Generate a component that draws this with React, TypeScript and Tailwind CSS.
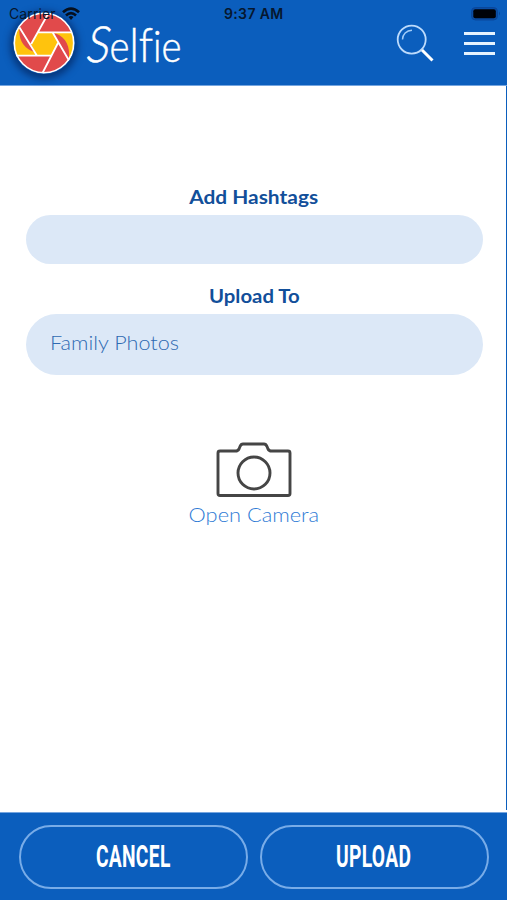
function ShutterLogo() {
  return (
    <svg
      viewBox="0 0 62 62"
      className="h-[62px] w-[62px] shrink-0 rounded-full shadow-[0_2px_7px_3px_rgba(0,15,60,0.5)]"
    >
      <circle cx="31" cy="31" r="30" fill="#e14a4b" />
      {/* Yellow blades and opening */}
      <path
        d="M25 20.3H39.5L45.5 31L38 43.7H24L18 32Z M6 15C-1 26 0 36 3.5 43.7H24L21.5 40C12 37 5 29 6.5 15Z M39.5 20.3H59C62 30 61 41 55.5 48C58 35 53 24 39.5 20.3Z"
        fill="#ffc30d"
      />
      <path
        d="M35 2L18.2 32M25 20.3H59M6.5 15.5L24 43.7M3 43.7H38M29.5 61L45.5 30M39.5 20.3L56 48.5"
        fill="none"
        stroke="white"
        strokeWidth="1.8"
      />
      <circle cx="31" cy="31" r="29.7" fill="none" stroke="white" strokeWidth="1.6" />
    </svg>
  );
}

// Handwritten-looking wordmark, the S leans more than the other letters
function Wordmark() {
  return (
    <h1 className="ml-[13px] mt-[5px] flex h-[52px] w-28 origin-left scale-x-[0.87] items-baseline whitespace-nowrap text-[44px] font-light leading-[52px] text-white [-webkit-text-stroke:0.5px_white]">
      <span className="-skew-x-12 text-[50px]">S</span>
      <span className="-ml-0.5">e</span>
      <span className="text-[48px]">l</span>
      <span className="text-[48px]">f</span>
      <span>i</span>
      <span>e</span>
    </h1>
  );
}

function SearchIcon() {
  return (
    <svg viewBox="0 0 38 38" className="h-[38px] w-[38px]" fill="none">
      <circle cx="15.7" cy="15.6" r="14" stroke="#bddbfc" strokeWidth="1.8" />
      <path d="M6.5 15.5C6.5 10.5 10.5 6.3 16 6.2" stroke="#a2ccf8" strokeWidth="1.5" />
      <path d="M26 26L36.5 36.5" stroke="white" strokeWidth="3" />
    </svg>
  );
}

function CameraIcon() {
  return (
    <svg
      viewBox="0 0 76 56"
      className="h-14 w-[76px]"
      fill="none"
      stroke="#454545"
      strokeWidth="2.9"
      strokeLinejoin="round"
    >
      <path d="M4 9H19.5Q22 9 23 7L24 4.5Q25 2 27 2H48Q50 2 51 4.5L52 7Q53 9 55.5 9H72Q74 9 74 11V51.5Q74 53.5 72 53.5H4Q2 53.5 2 51.5V11Q2 9 4 9Z" />
      <circle cx="38" cy="31" r="16" />
    </svg>
  );
}

function StatusBar() {
  return (
    <div className="absolute inset-x-0 top-0 flex h-7 items-center pl-[9px] pr-2 font-['Inter',sans-serif] text-[#06172f]">
      <span className="w-[53px] text-sm tracking-[0.1px]">Carrier</span>
      <svg viewBox="0 0 18 14" className="h-3.5 w-[18px]" fill="none" stroke="#06101f" strokeWidth="2.7">
        <path d="M1 5.2Q9-2 17 5.2M4 8.4Q9 4 14 8.4" />
        <path d="M6.5 10Q9 8 11.5 10L9 13Z" fill="#06101f" stroke="none" />
      </svg>
      <span className="ml-[144px] whitespace-nowrap text-sm font-semibold tracking-[0.35px]">
        9:37 AM
      </span>
      <svg viewBox="0 0 30 14" className="ml-auto -mr-0.5 h-3.5 w-[30px]">
        <rect x="0.5" y="0.5" width="26" height="12.5" rx="4" fill="#0a4da4" stroke="#0a479b" />
        <rect x="2.3" y="2.2" width="22.5" height="9" rx="2" fill="#000208" />
        <path d="M28 4.5Q30 6.5 28 8.5Z" fill="#0a479b" />
      </svg>
    </div>
  );
}

function ActionButton({ label }: { label: string }) {
  return (
    <button className="flex h-16 w-[229px] items-center justify-center rounded-full border-[2.5px] border-[#78ace8] text-white">
      <span className="inline-block scale-x-[0.62] whitespace-nowrap font-['Roboto',sans-serif] text-[31px] font-bold leading-none tracking-[0.5px]">
        {label}
      </span>
    </button>
  );
}

export default function App() {
  return (
    <div className="flex h-[900px] w-[507px] flex-col overflow-hidden bg-white font-['Lato',sans-serif]">
      <header className="relative flex h-[86px] shrink-0 items-start border-b border-[#75a5df] bg-[#0b5ebd] pl-[13px] pr-3 pt-3">
        <ShutterLogo />
        <Wordmark />
        <div className="ml-auto mt-3 flex items-start gap-[30px]">
          <SearchIcon />
          <div className="mt-2 flex w-[31px] flex-col gap-[7px]">
            <span className="h-[3px] bg-[#e5f3ff]" />
            <span className="h-[3px] bg-[#e5f3ff]" />
            <span className="h-[3px] bg-[#e5f3ff]" />
          </div>
        </div>
        <StatusBar />
      </header>

      <main className="mb-0.5 flex flex-1 flex-col items-center border-r-[1.5px] border-[#0b5ebd] pl-[26px] pr-6 pt-[97px]">
        <label className="h-[31.5px] scale-x-110 text-[19px] font-bold leading-[27px] text-[#124f9a]">
          Add Hashtags
        </label>
        <div className="h-[49px] w-[457px] rounded-full bg-[#dce8f7]" />
        <label className="mt-[18.5px] h-8 scale-x-[1.07] text-[19px] font-bold leading-[28px] text-[#124f9a]">
          Upload To
        </label>
        <div className="flex h-[60.5px] w-[457px] items-center rounded-full bg-[#dce8f7] pb-1 pl-6 text-xl font-light text-[#2f6ab2]">
          <span className="origin-left scale-x-[1.08]">Family Photos</span>
        </div>
        <button className="mt-[67.5px] flex flex-col items-center text-xl font-light text-[#2f7bd5]">
          <CameraIcon />
          <span className="scale-x-[1.09] leading-8">Open Camera</span>
        </button>
      </main>

      <footer className="flex h-[88px] shrink-0 items-center justify-center gap-3 border-t border-[#75a5df] bg-[#0b5ebd]">
        <ActionButton label="CANCEL" />
        <ActionButton label="UPLOAD" />
      </footer>
    </div>
  );
}
